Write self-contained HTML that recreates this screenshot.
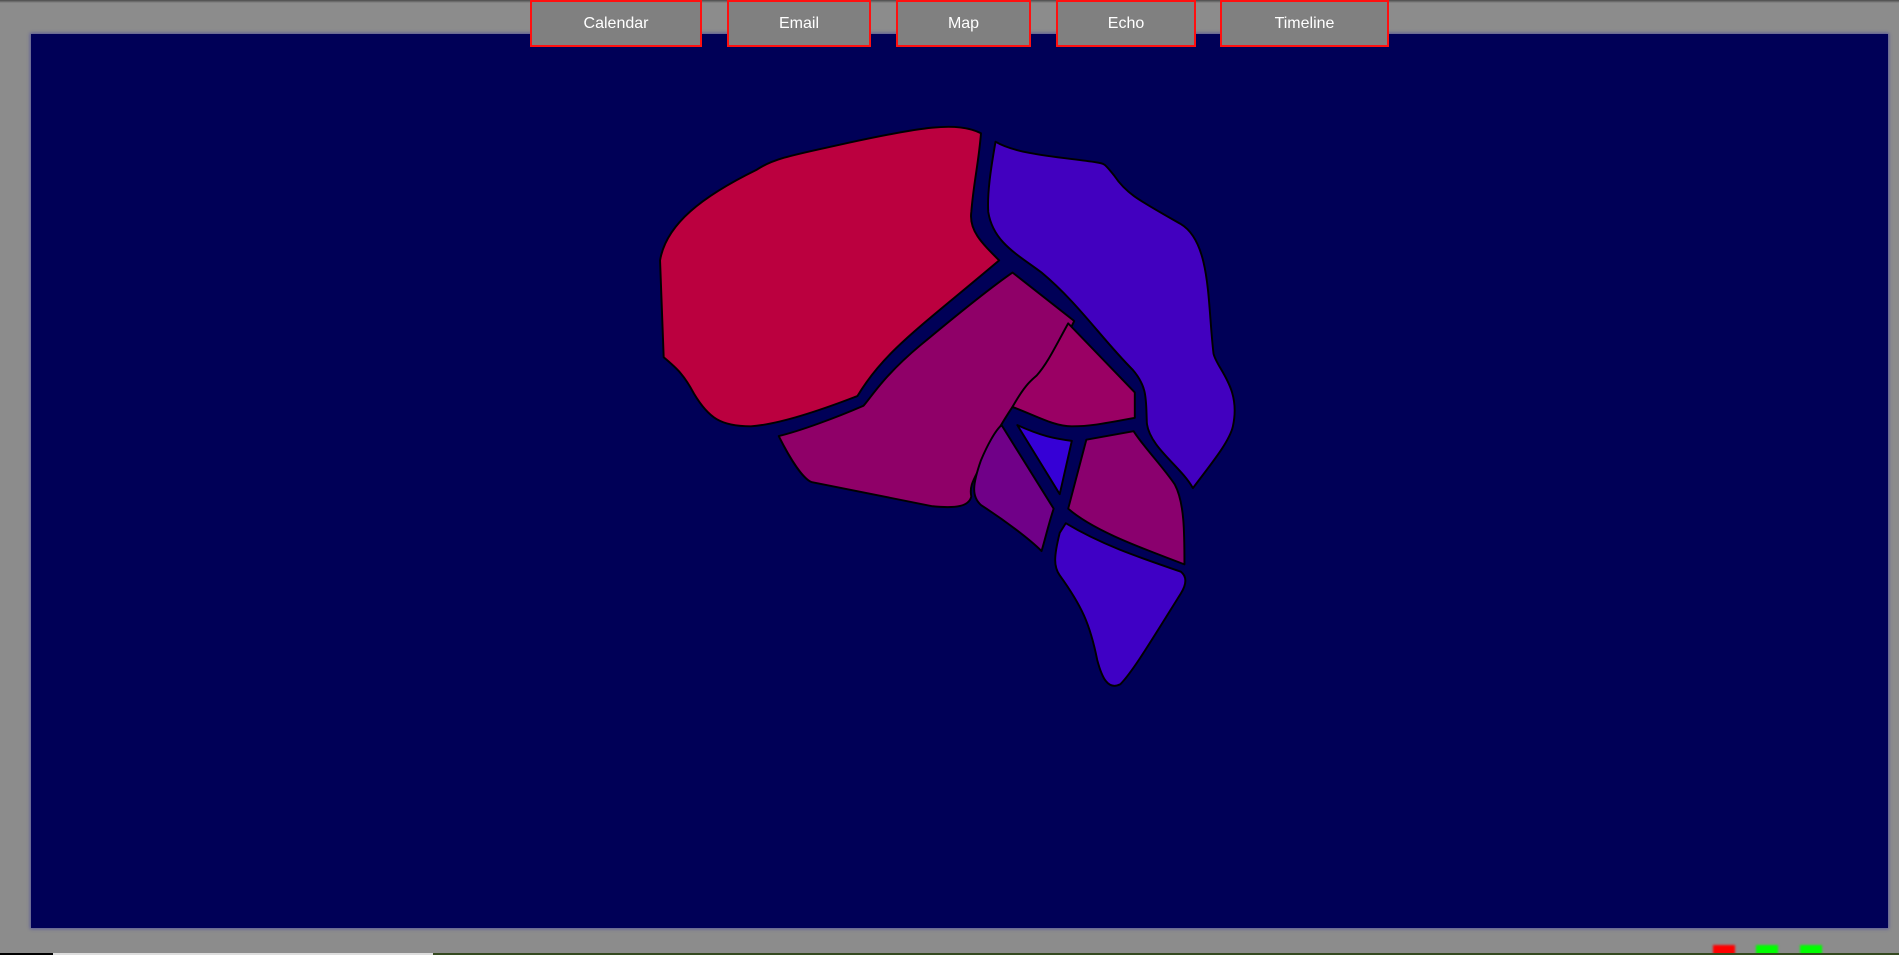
<!DOCTYPE html>
<html><head><meta charset="utf-8"><style>
html,body{margin:0;padding:0;width:1899px;height:955px;overflow:hidden;background:#8c8c8c;font-family:"Liberation Sans",sans-serif;}
.top{position:absolute;left:0;top:0;width:1899px;height:3px;background:linear-gradient(#4a4a4a,#8c8c8c);}
.panel{position:absolute;left:31px;top:34px;width:1857px;height:894px;background:#000057;box-shadow:0 0 3px 1px #5a5a9a;}
.btn{position:absolute;top:0;height:43px;background:#808080;border:2px solid #ff1010;color:#fff;font-size:16px;line-height:43px;text-align:center;box-sizing:content-box;}
.ind{position:absolute;top:945px;width:22px;height:10px;filter:blur(1px);}
svg{position:absolute;left:0;top:0;}
</style></head><body>
<div class="top"></div>
<div class="panel"></div>
<svg width="1899" height="955" viewBox="0 0 1568 788.5">
<g stroke="#000" stroke-width="1.6" stroke-linejoin="round">
<path fill="#bb003f" d="M810,110 C790,100 760,105 700,118 C660,127 640,130 625,140 C580,162 550,185 545,215 L548,295 C560,305 565,310 573,325 C585,345 595,352 620,352 C650,350 700,330 708,327 C730,290 760,270 825,215 C810,200 800,190 802,175 C804,150 808,135 810,110 Z"/>
<path fill="#4200bf" d="M822,117 C818,140 815,160 816,175 C820,200 840,210 860,225 C890,250 910,280 935,305 C948,320 946,330 947,350 C950,370 975,385 985,403 C1000,383 1015,365 1018,352 C1025,320 1005,305 1002,292 C997,250 1000,200 975,185 C940,165 930,160 920,145 C912,135 912,135 905,134 C880,130 840,128 822,117 Z"/>
<path fill="#8f0068" d="M836,225 L887,265 C880,280 868,300 862,306 C843,320 820,360 812,380 C805,395 800,400 802,410 C800,418 790,420 770,418 L670,398 C663,395 653,380 643,360 C660,356 690,345 713,335 C720,327 730,310 760,285 C790,260 820,236 836,225 Z"/>
<path fill="#9a0064" d="M882,267 L937,324 L937,345 C910,350 900,352 885,352 C870,352 855,343 836,336 C845,320 850,315 856,310 C865,300 872,285 882,267 Z"/>
<path fill="#3600d6" d="M840,351 C860,360 870,362 885,364 L875,408 Z"/>
<path fill="#700088" d="M827,351 L870,420 C866,432 863,445 860,455 C850,445 830,430 810,417 C802,410 803,400 810,380 C815,368 822,355 827,351 Z"/>
<path fill="#8a006e" d="M897,363 L936,356 C945,370 960,385 970,400 C978,415 978,440 978,466 C950,455 905,440 882,420 Z"/>
<path fill="#3f00c5" d="M880,432 C910,450 940,460 975,472 C980,476 980,482 975,490 C950,530 935,555 925,565 C915,570 910,560 906,545 C900,515 893,500 875,475 C870,468 870,460 875,440 Z"/>
</g>
</svg>
<div class="btn" style="left:530px;width:168px">Calendar</div>
<div class="btn" style="left:727px;width:140px">Email</div>
<div class="btn" style="left:896px;width:131px">Map</div>
<div class="btn" style="left:1056px;width:136px">Echo</div>
<div class="btn" style="left:1220px;width:165px">Timeline</div>
<div class="ind" style="left:1713px;background:#ff0000"></div>
<div class="ind" style="left:1756px;background:#00ff00"></div>
<div class="ind" style="left:1800px;background:#00ff00"></div>
<div style="position:absolute;left:0;top:953px;width:53px;height:2px;background:#000"></div>
<div style="position:absolute;left:53px;top:953px;width:380px;height:2px;background:#ddd"></div>
<div style="position:absolute;left:433px;top:953px;width:1466px;height:2px;background:#354a20"></div>
</body></html>
